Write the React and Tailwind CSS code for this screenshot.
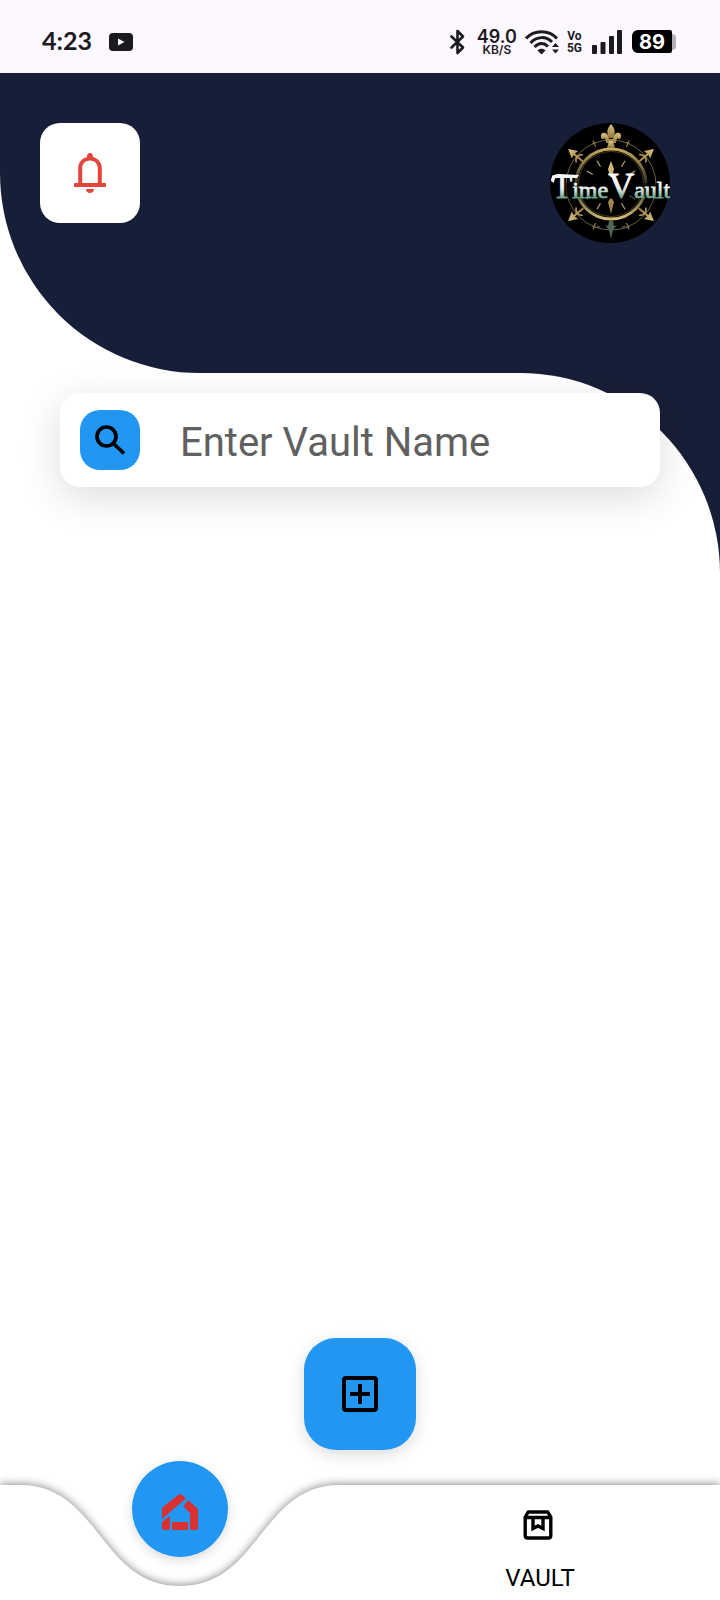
import React from "react";

function StatusBar() {
  return (
    <div className="flex h-[73px] items-center justify-between bg-[#fdf7ff] pt-2.5 pr-11 pl-[42px] text-[#1b1a1f]">
      <div className="flex items-center gap-4">
        <span className="pb-1 font-['Lato',sans-serif] text-[25px] leading-6 font-bold">4:23</span>
        <svg width="26" height="18" viewBox="0 0 26 18" aria-hidden="true">
          <rect x="1" width="24" height="18" rx="4" fill="currentColor" />
          <path d="M10 5.500v7L16.500 9z" fill="#fdf7ff" />
        </svg>
      </div>
      <div className="flex items-center">
        <svg width="16" height="26" viewBox="0 0 16 26" fill="none" stroke="currentColor" strokeWidth="2.600" strokeLinejoin="round" strokeLinecap="round" aria-hidden="true">
          <path d="M2.500 7.500l11.500 11L8.500 24V2l5.500 5.500L2.500 18.500" />
        </svg>
        <div className="ml-3 flex flex-col items-center font-['Inter',sans-serif] font-semibold">
          <span className="text-[18px] leading-[15px]">49.0</span>
          <span className="text-xs leading-[11px]">KB/S</span>
        </div>
        <svg className="ml-2" width="34" height="26" viewBox="0 0 34 26" fill="none" stroke="currentColor" strokeWidth="3" aria-hidden="true">
          <path d="M1 9.500C9 .5 24 .5 32 9.500M5.500 14C12 7 21 7 27 13M9.500 18C14 13.500 19 13.500 23 17.500" />
          <path d="M12.500 21.500c2-2.500 6-2.500 8 0L16.500 25.500z" fill="currentColor" stroke="none" />
          <path d="M27 18l3.500-4 3.500 4zM27 20.500h7l-3.500 4z" fill="currentColor" stroke="none" />
        </svg>
        <div className="ml-2 flex flex-col items-center font-['Roboto',sans-serif] text-xs leading-3 font-bold">
          <span>Vo</span>
          <span>5G</span>
        </div>
        <svg className="ml-2.5" width="30" height="24" viewBox="0 0 30 24" fill="currentColor" aria-hidden="true">
          <rect y="15" width="5" height="9" rx="1" />
          <rect x="8.500" y="12" width="5" height="12" rx="1" />
          <rect x="17" y="6" width="5" height="18" rx="1" />
          <rect x="25" width="5" height="24" rx="1" />
        </svg>
        <div className="ml-2.5 flex items-center">
          <span className="flex h-[23px] w-10 items-center justify-center rounded-l-md rounded-r-xs bg-black font-['Inter',sans-serif] text-[20px] leading-none font-bold text-white">89</span>
          <span className="h-4 w-1 rounded-r-full bg-[#b3adb8]" />
        </div>
      </div>
    </div>
  );
}

function Arrow({ angle }) {
  return (
    <g transform={`rotate(${angle} 61 62)`}>
      <path d="M61 6l5 9-4-1v12h-2V14l-4 1z" fill="url(#gold)" />
      <path d="M56 21c2-4 8-4 10 0" fill="none" stroke="#b79b56" strokeWidth="1.500" />
    </g>
  );
}

function Logo() {
  const ticks = [30, 60, 120, 150, 210, 240, 300, 330];
  return (
    <svg className="size-[120px]" viewBox="0 0 120 120" role="img" aria-label="TimeVault">
      <defs>
        <linearGradient id="gold" x1="0" y1="0" x2="0" y2="1">
          <stop offset="0" stopColor="#d9c482" />
          <stop offset="1" stopColor="#94753a" />
        </linearGradient>
        <linearGradient id="ring" x1="0" y1="0" x2="0" y2="1">
          <stop offset="0" stopColor="#c9a95c" />
          <stop offset=".5" stopColor="#2b3025" />
          <stop offset="1" stopColor="#d5bd79" />
        </linearGradient>
        <linearGradient id="steel" gradientUnits="userSpaceOnUse" x1="0" y1="54" x2="0" y2="77">
          <stop offset="0" stopColor="#ffffff" />
          <stop offset=".5" stopColor="#e8efeb" />
          <stop offset="1" stopColor="#4a8c6e" />
        </linearGradient>
      </defs>
      <circle cx="60" cy="60" r="60" fill="#000" />
      <circle cx="61" cy="62" r="45" fill="none" stroke="#6b5f3a" strokeWidth="1" />
      <circle cx="61" cy="61" r="35" fill="none" stroke="url(#ring)" strokeWidth="3" />
      <circle cx="61" cy="61" r="32.500" fill="none" stroke="#5f5532" strokeWidth=".7" />
      {ticks.map((a) => (
        <path key={a} d="M61 34v7" transform={`rotate(${a} 61 62)`} stroke="#b9a263" strokeWidth="1.200" />
      ))}
      {[22, 158, 202, 338].map((a) => (
        <path key={a} d="M61 14v7M59 17h4" transform={`rotate(${a} 61 62)`} stroke="#8c7542" strokeWidth="1.200" />
      ))}
      <Arrow angle={-50} />
      <Arrow angle={50} />
      <Arrow angle={130} />
      <Arrow angle={230} />
      <path d="M61 38l3 8-2 8h-2l-2-8zM61 74l3 5-3 12-3-12z" fill="url(#gold)" />
      <g fill="url(#gold)">
        <path d="M61 1c4 5 5 8 2 14h-4c-3-6-2-9 2-14z" />
        <path d="M59 16c-1-8-9-8-8-2 0 2 3 3 3 1 2 1 2 3 2 5h10c0-2 0-4 2-5 0 2 3 1 3-1 1-6-7-6-8 2z" />
        <path d="M59 18h4l2 7h-8z" />
      </g>
      <path d="M59 98h4l1 5 3-1-4 5-2 9-2-9-4-5 3 1z" fill="#4c6653" />
      <path d="M47 102l4 2-4 2zM75 102l-4 2 4 2z" fill="#3c5143" />
      <path d="M19 60h100v16H10V60z" fill="#000" opacity=".55" />
      <text x="2" y="75" fill="url(#steel)" stroke="url(#steel)" strokeWidth=".8" fontFamily="'Liberation Serif', serif">
        <tspan fontSize="33">T</tspan>
        <tspan fontSize="24">ime</tspan>
        <tspan fontSize="36">V</tspan>
        <tspan fontSize="24">ault</tspan>
      </text>
      <path d="M1 58c0-6 4-7 9-7l19 1-2 3H9c-3 0-5-1-5 5z" fill="#f4f6f5" />
    </svg>
  );
}

function Header() {
  return (
    <header className="flex h-[300px] items-start justify-between rounded-bl-[200px] bg-[#171e37] pt-[50px] pr-[50px] pl-10">
      <button type="button" aria-label="Notifications" className="flex size-[100px] items-center justify-center rounded-[20px] bg-white">
        <svg width="34" height="42" viewBox="0 0 34 42" fill="#e5443a" aria-hidden="true">
          <path d="M17 1c2 0 3 1.500 3 4 5.500 1.500 8.800 6 8.800 11v15H32q1 0 1 1v2q0 1-1 1H2q-1 0-1-1v-2q0-1 1-1h3.200V16c0-5 3.300-9.500 8.800-11 0-2.500 1-4 3-4zM9.200 31h15.600V16c0-4.500-3.300-7.500-7.800-7.500S9.200 11.500 9.200 16z" fillRule="evenodd" />
          <path d="M13 37h8c0 2.500-2 4-4 4s-4-1.500-4-4z" />
        </svg>
      </button>
      <Logo />
    </header>
  );
}

function SearchBar() {
  return (
    <div className="flex h-[94px] items-center rounded-[20px] bg-white px-5 shadow-[0_10px_40px_rgba(0,0,0,0.14)]">
      <button type="button" aria-label="Search" className="flex size-[60px] shrink-0 items-center justify-center rounded-[20px] bg-[#2196f3]">
        <svg width="32" height="32" viewBox="0 0 32 32" fill="none" stroke="#000" strokeWidth="3.700" aria-hidden="true">
          <circle cx="12.500" cy="12.500" r="9.500" />
          <path d="M19.500 19.500l10.500 10" />
        </svg>
      </button>
      <input
        type="text"
        aria-label="Enter Vault Name"
        placeholder="Enter Vault Name"
        className="mt-1.5 ml-10 h-12 min-w-0 flex-1 bg-transparent font-['Roboto',sans-serif] text-[40px] leading-[48px] text-black outline-none placeholder:text-[#606060]"
      />
    </div>
  );
}

function BottomNav() {
  return (
    <nav className="relative h-[115px]">
      <svg className="absolute inset-0 size-full overflow-visible drop-shadow-[0_-1px_4px_rgba(0,0,0,0.45)]" viewBox="0 0 720 115" preserveAspectRatio="none" aria-hidden="true">
        <path d="M0 0H20C100 0 100 101 180 101S260 0 340 0H720V115H0z" fill="#fff" />
      </svg>
      <div className="relative grid h-full grid-cols-2">
        <a href="#home" aria-label="Home" className="-mt-6 flex size-24 items-center justify-center justify-self-center rounded-full bg-[#2196f3] shadow-[0_3px_12px_rgba(0,0,0,0.15)]">
          <svg className="mt-1.5" width="36" height="36" viewBox="0 0 36 36" fill="#d93030" aria-hidden="true">
            <path d="M0 15q0-1 1-2L16 1q2-1.500 4 0l4 3.500L8 18l-8 7z" />
            <path d="M26 6l9 8q1 1 1 2v18q0 2-2 2h-4q-2 0-2-2V19l-6.500-6.500z" />
            <path d="M0 28l8-6v12q0 2-2 2H2q-2 0-2-2z" />
            <path d="M10 28h16v8H12q-2 0-2-2z" />
          </svg>
        </a>
        <a href="#vault" className="flex flex-col items-center gap-6 pt-[25px] text-black">
          <svg className="mr-1" width="30" height="30" viewBox="0 0 30 30" fill="none" stroke="#000" strokeWidth="3.400" strokeLinejoin="round" aria-hidden="true">
            <path d="M2.200 7v18.500q0 2.500 2.500 2.500h20.600q2.500 0 2.500-2.500V7l-3-5H5.200zM2.200 7.500h25.600" />
            <path d="M10 8v10.500l5-2.500 5 2.500V8" strokeLinejoin="miter" />
          </svg>
          <span className="font-['Roboto',sans-serif] text-2xl leading-7">VAULT</span>
        </a>
      </div>
    </nav>
  );
}

export default function App() {
  return (
    <div className="flex min-h-screen flex-col bg-white">
      <StatusBar />
      <Header />
      <main className="flex flex-1 flex-col">
        <section className="bg-linear-to-r from-white from-50% to-[#171e37] to-50%">
          <div className="h-[200px] rounded-tr-[200px] bg-white px-[60px] pt-5">
            <SearchBar />
          </div>
        </section>
        <button type="button" aria-label="Add vault" className="mx-auto mt-auto mb-[35px] flex size-28 items-center justify-center rounded-[32px] bg-[#2196f3] shadow-[0_4px_16px_rgba(0,0,0,0.15)]">
          <svg width="36" height="36" viewBox="0 0 36 36" fill="none" stroke="#000" strokeWidth="4" aria-hidden="true">
            <rect x="2" y="2" width="32" height="32" rx="2" />
            <path d="M18 8v20M8 18h20" />
          </svg>
        </button>
      </main>
      <BottomNav />
    </div>
  );
}
